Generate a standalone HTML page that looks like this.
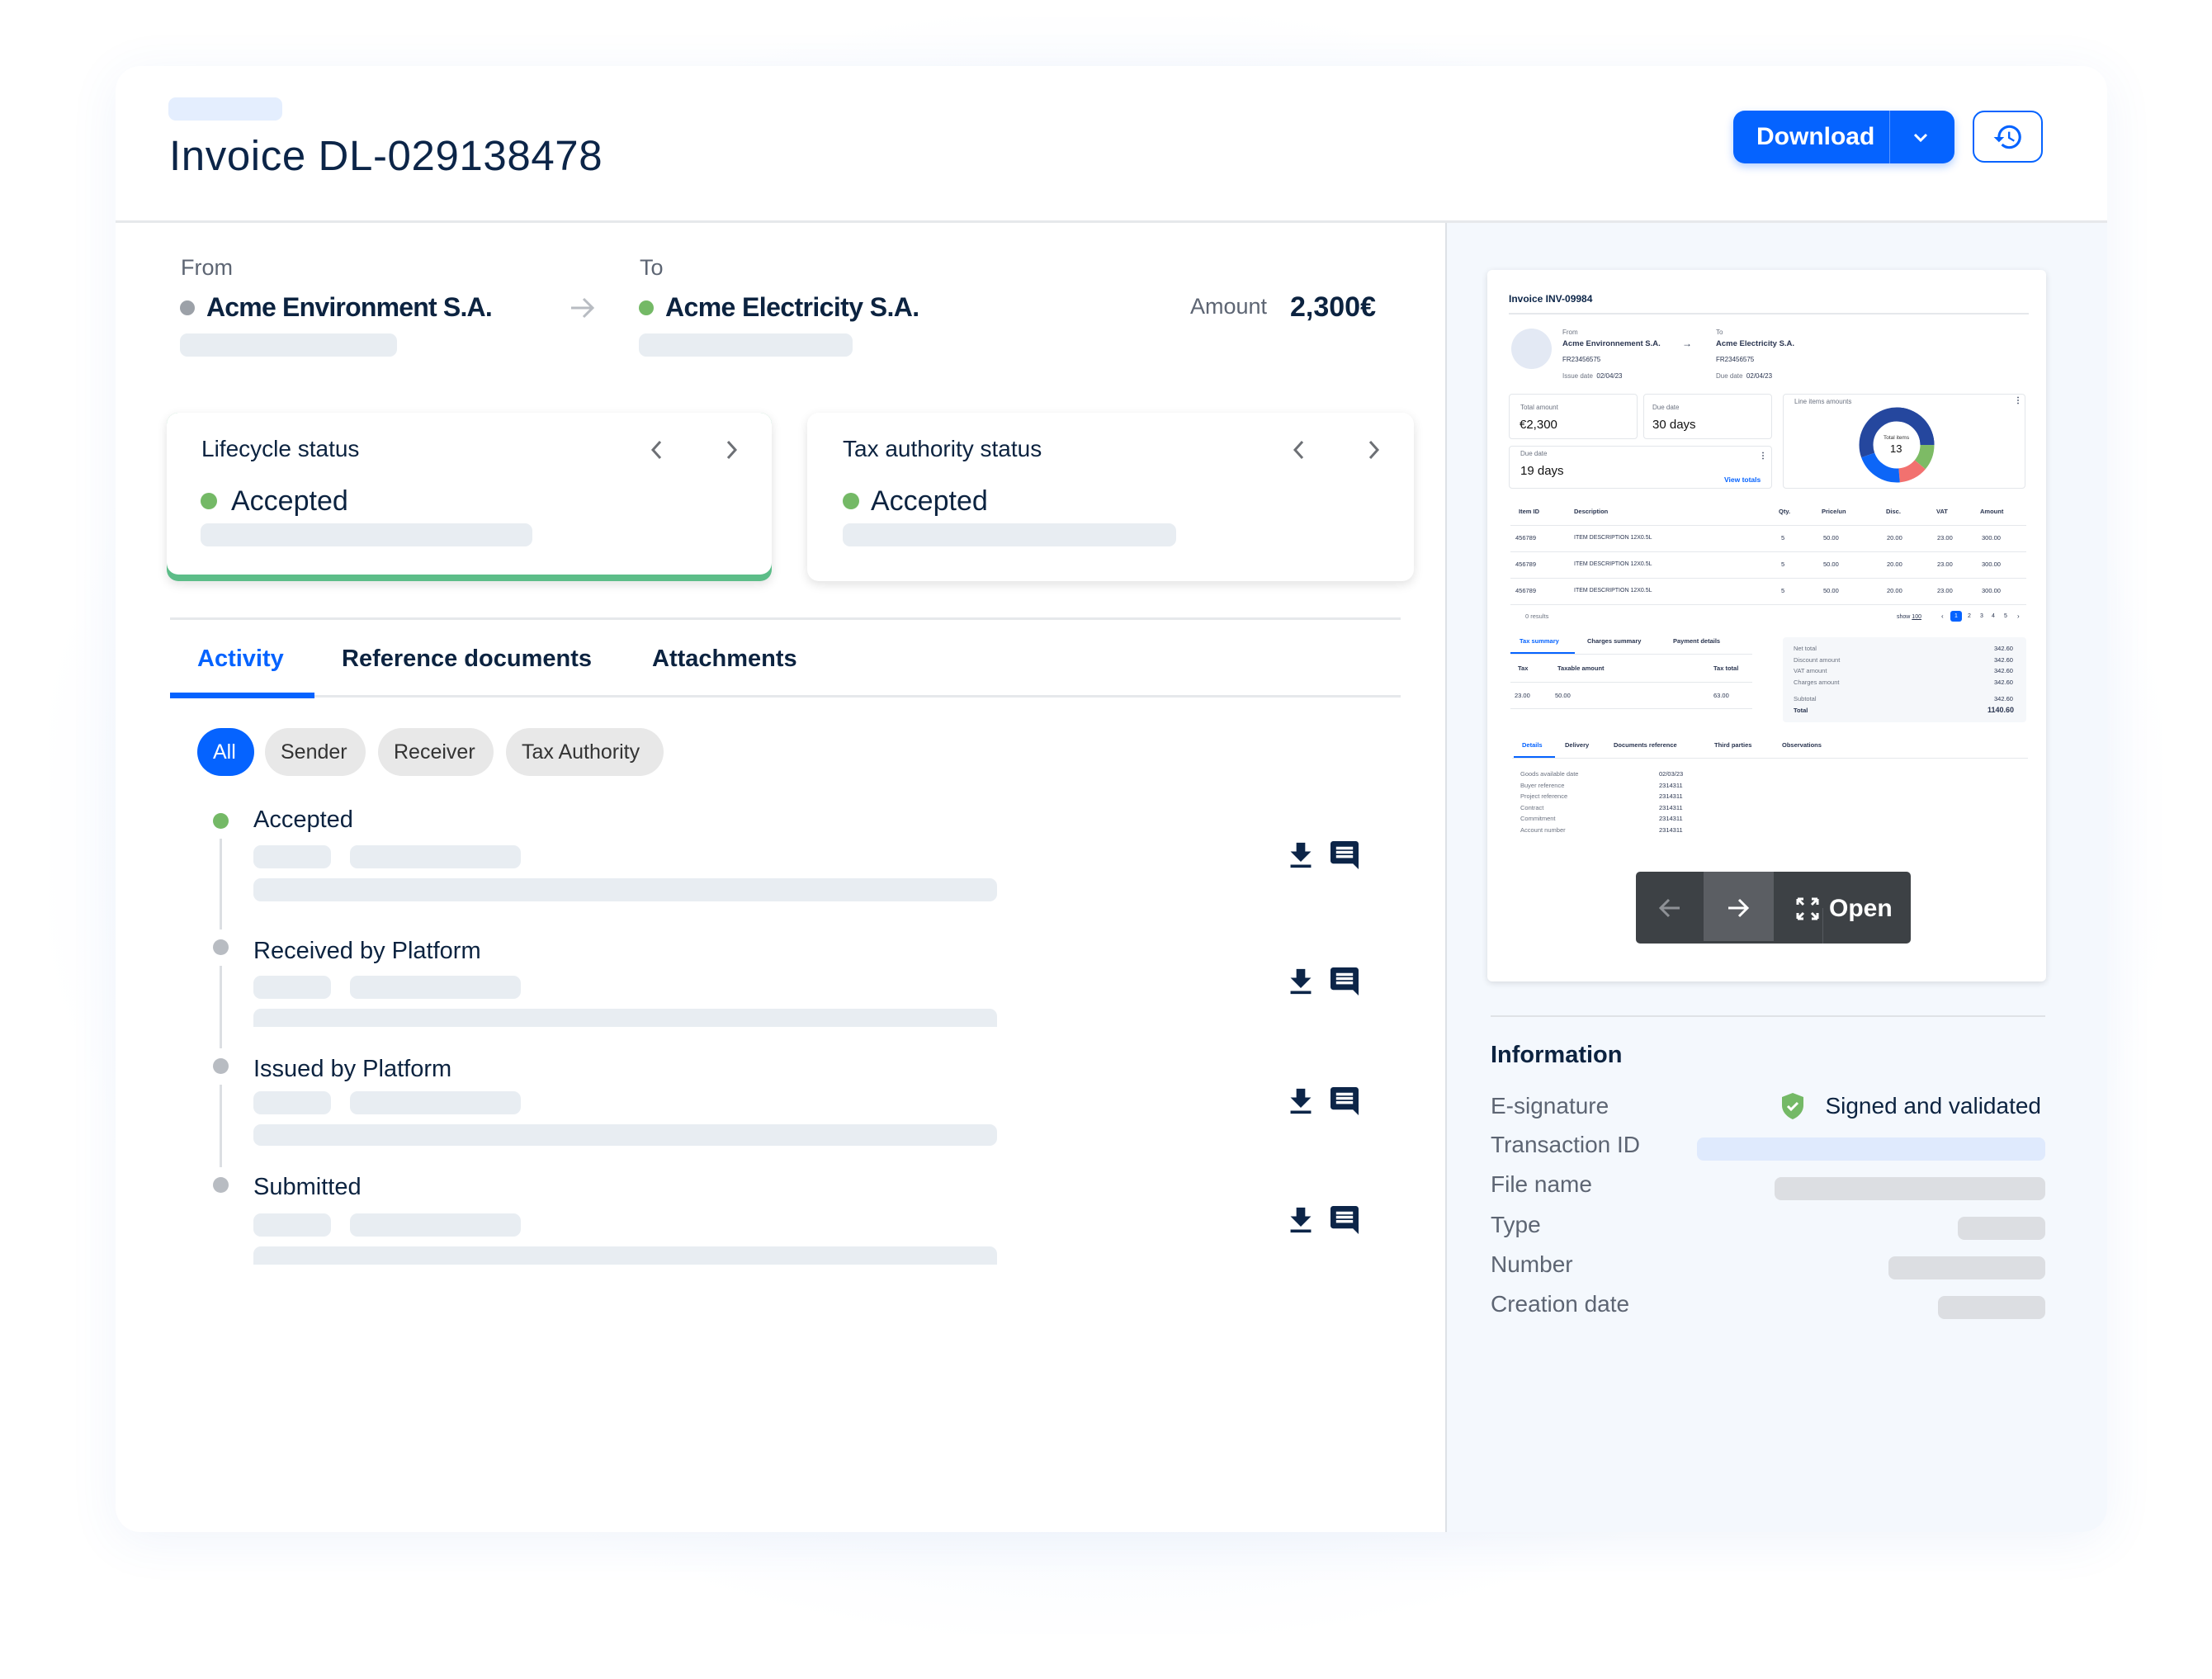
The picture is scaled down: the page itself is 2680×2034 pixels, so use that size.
<!DOCTYPE html>
<html><head><meta charset="utf-8"><style>
*{margin:0;padding:0;box-sizing:border-box}
body{width:2680px;height:2034px;position:relative;overflow:hidden;background:#fff;font-family:"Liberation Sans",sans-serif;color:#0c2340}
.a{position:absolute}
.t{position:absolute;white-space:nowrap;line-height:1}
.bar{position:absolute;background:#e8edf2;border-radius:9px}
.g{color:#5d6573}
.b{font-weight:bold}
.p{position:absolute;white-space:nowrap;line-height:1;font-size:9px;color:#2a3550}
.pl{color:#6b7280}
.ln{position:absolute;height:1px;background:#e5e8ec}
</style></head><body>
<div class="a" style="left:60px;top:20px;width:2560px;height:1960px;border-radius:80px;background:radial-gradient(ellipse at center,#eef4fd 40%,rgba(255,255,255,0) 72%)"></div>
<div class="a" style="left:140px;top:80px;width:2413px;height:1776px;background:#fff;border-radius:30px;overflow:hidden;box-shadow:0 10px 60px rgba(60,110,200,0.08)">
  <div class="a" style="left:1611px;top:188px;width:802px;height:1588px;background:#f4f8fd;border-left:2px solid #dde1e6"></div>
  <div class="a" style="left:0;top:187px;width:2413px;height:3px;background:#e6e8eb"></div>
</div>
<!-- header -->
<div class="a" style="left:204px;top:118px;width:138px;height:28px;background:#e4eefe;border-radius:9px"></div>
<div class="t" style="left:205px;top:163px;font-size:51px;letter-spacing:0.6px;color:#0c2548">Invoice DL-029138478</div>
<div class="a" style="left:2100px;top:134px;width:268px;height:64px;background:#0563ff;border-radius:14px;box-shadow:0 4px 10px rgba(5,99,255,0.3)"></div>
<div class="t b" style="left:2128px;top:151px;font-size:30px;color:#fff">Download</div>
<div class="a" style="left:2289px;top:134px;width:1px;height:64px;background:#5c97ff"></div>
<svg class="a" style="left:2315px;top:154px" width="24" height="24" viewBox="0 0 24 24"><path d="M5 9l7 7 7-7" fill="none" stroke="#fff" stroke-width="3"/></svg>
<div class="a" style="left:2390px;top:134px;width:85px;height:63px;border:2.5px solid #0563ff;border-radius:14px;background:#fff"></div>
<svg class="a" style="left:2414px;top:147px" width="38" height="38" viewBox="0 0 24 24"><path fill="#0563ff" d="M13 3a9 9 0 0 0-9 9H1l3.890 3.89.07.14L9 12H6c0-3.87 3.13-7 7-7s7 3.13 7 7-3.13 7-7 7c-1.93 0-3.68-.79-4.940-2.06l-1.42 1.42A8.954 8.954 0 0 0 13 21a9 9 0 0 0 0-18zm-1 5v5l4.28 2.54.72-1.21-3.5-2.08V8H12z"/></svg>
<!-- from/to -->
<div class="t g" style="left:219px;top:311px;font-size:27px">From</div>
<div class="a" style="left:218px;top:364px;width:18px;height:18px;border-radius:50%;background:#9ca1a8"></div>
<div class="t b" style="left:250px;top:356px;font-size:32px;letter-spacing:-0.8px">Acme Environment S.A.</div>
<div class="bar" style="left:218px;top:404px;width:263px;height:28px"></div>
<svg class="a" style="left:690px;top:358px" width="32" height="30" viewBox="0 0 32 30"><path d="M2 15h26M17 4l11 11-11 11" fill="none" stroke="#b8bcc2" stroke-width="3"/></svg>
<div class="t g" style="left:775px;top:311px;font-size:27px">To</div>
<div class="a" style="left:774px;top:364px;width:18px;height:18px;border-radius:50%;background:#74b966"></div>
<div class="t b" style="left:806px;top:356px;font-size:32px;letter-spacing:-0.6px">Acme Electricity S.A.</div>
<div class="bar" style="left:774px;top:404px;width:259px;height:28px"></div>
<div class="t g" style="left:1442px;top:358px;font-size:27px">Amount</div>
<div class="t b" style="left:1563px;top:355px;font-size:34px">2,300€</div>
<!-- status cards -->
<div class="a" style="left:202px;top:500px;width:733px;height:204px;background:#5cbd88;border-radius:14px;box-shadow:0 4px 12px rgba(0,0,0,0.12)"></div>
<div class="a" style="left:202px;top:500px;width:733px;height:196px;background:#fff;border-radius:14px"></div>
<div class="a" style="left:978px;top:500px;width:735px;height:204px;background:#fff;border-radius:14px;box-shadow:0 4px 12px rgba(0,0,0,0.12)"></div>
<div class="t" style="left:244px;top:530px;font-size:28px">Lifecycle status</div>
<div class="t" style="left:1021px;top:530px;font-size:28px">Tax authority status</div>
<svg class="a" style="left:784px;top:531px" width="120" height="28" viewBox="0 0 120 28"><path d="M16 4l-9 10 9 10M98 4l9 10-9 10" fill="none" stroke="#6d7075" stroke-width="3"/></svg>
<svg class="a" style="left:1562px;top:531px" width="120" height="28" viewBox="0 0 120 28"><path d="M16 4l-9 10 9 10M98 4l9 10-9 10" fill="none" stroke="#6d7075" stroke-width="3"/></svg>
<div class="a" style="left:243px;top:597px;width:20px;height:20px;border-radius:50%;background:#74b966"></div>
<div class="t" style="left:280px;top:590px;font-size:34px">Accepted</div>
<div class="bar" style="left:243px;top:634px;width:402px;height:28px"></div>
<div class="a" style="left:1021px;top:597px;width:20px;height:20px;border-radius:50%;background:#74b966"></div>
<div class="t" style="left:1055px;top:590px;font-size:34px">Accepted</div>
<div class="bar" style="left:1021px;top:634px;width:404px;height:28px"></div>
<!-- tabs -->
<div class="a" style="left:206px;top:748px;width:1491px;height:3px;background:#e6e8eb"></div>
<div class="a" style="left:206px;top:842px;width:1491px;height:3px;background:#e6e8eb"></div>
<div class="a" style="left:206px;top:839px;width:175px;height:7px;background:#0563ff"></div>
<div class="t b" style="left:239px;top:784px;font-size:29px;color:#0563ff">Activity</div>
<div class="t b" style="left:414px;top:784px;font-size:29px">Reference documents</div>
<div class="t b" style="left:790px;top:784px;font-size:29px">Attachments</div>
<!-- chips -->
<div class="a" style="left:239px;top:882px;width:69px;height:58px;border-radius:29px;background:#0563ff"></div>
<div class="t" style="left:258px;top:899px;font-size:25px;color:#fff">All</div>
<div class="a" style="left:321px;top:882px;width:122px;height:58px;border-radius:29px;background:#e8e8e8"></div>
<div class="t" style="left:340px;top:899px;font-size:25px;color:#333">Sender</div>
<div class="a" style="left:458px;top:882px;width:140px;height:58px;border-radius:29px;background:#e8e8e8"></div>
<div class="t" style="left:477px;top:899px;font-size:25px;color:#333">Receiver</div>
<div class="a" style="left:613px;top:882px;width:191px;height:58px;border-radius:29px;background:#e8e8e8"></div>
<div class="t" style="left:632px;top:899px;font-size:25px;color:#333">Tax Authority</div>
<!-- timeline -->
<div class="a" style="left:266px;top:1016px;width:3px;height:110px;background:#dcdfe3"></div>
<div class="a" style="left:266px;top:1170px;width:3px;height:100px;background:#dcdfe3"></div>
<div class="a" style="left:266px;top:1314px;width:3px;height:100px;background:#dcdfe3"></div>

<div class="a" style="left:258px;top:985px;width:19px;height:19px;border-radius:50%;background:#74b966"></div>
<div class="t" style="left:307px;top:979px;font-size:29px">Accepted</div>
<div class="bar" style="left:307px;top:1024px;width:94px;height:28px"></div>
<div class="bar" style="left:424px;top:1024px;width:207px;height:28px"></div>
<div class="bar" style="left:307px;top:1064px;width:901px;height:28px"></div>

<div class="a" style="left:258px;top:1138px;width:19px;height:19px;border-radius:50%;background:#b8bcc2"></div>
<div class="t" style="left:307px;top:1138px;font-size:29px">Received by Platform</div>
<div class="bar" style="left:307px;top:1182px;width:94px;height:28px"></div>
<div class="bar" style="left:424px;top:1182px;width:207px;height:28px"></div>
<div class="bar" style="left:307px;top:1222px;width:901px;height:22px;border-radius:9px 9px 0 0"></div>

<div class="a" style="left:258px;top:1282px;width:19px;height:19px;border-radius:50%;background:#b8bcc2"></div>
<div class="t" style="left:307px;top:1281px;font-size:29px">Issued by Platform</div>
<div class="bar" style="left:307px;top:1322px;width:94px;height:28px"></div>
<div class="bar" style="left:424px;top:1322px;width:207px;height:28px"></div>
<div class="bar" style="left:307px;top:1362px;width:901px;height:26px"></div>

<div class="a" style="left:258px;top:1426px;width:19px;height:19px;border-radius:50%;background:#b8bcc2"></div>
<div class="t" style="left:307px;top:1424px;font-size:29px">Submitted</div>
<div class="bar" style="left:307px;top:1470px;width:94px;height:28px"></div>
<div class="bar" style="left:424px;top:1470px;width:207px;height:28px"></div>
<div class="bar" style="left:307px;top:1510px;width:901px;height:22px;border-radius:9px 9px 0 0"></div>

<!-- icons -->
<svg class="a" style="left:1560px;top:1018px" width="32" height="36" viewBox="3 2 18 19"><path fill="#0c2548" d="M19 9h-4V3H9v6H5l7 7 7-7zM5 18v2h14v-2H5z"/></svg>
<svg class="a" style="left:1612px;top:1019px" width="34" height="34" viewBox="2 2 20 20"><path fill="#0c2548" d="M21.99 4c0-1.1-.89-2-1.99-2H4c-1.1 0-2 .9-2 2v12c0 1.1.9 2 2 2h14l4 4-.01-18zM18 14H6v-2h12v2zm0-3H6V9h12v2zm0-3H6V6h12v2z"/></svg>
<svg class="a" style="left:1560px;top:1171px" width="32" height="36" viewBox="3 2 18 19"><path fill="#0c2548" d="M19 9h-4V3H9v6H5l7 7 7-7zM5 18v2h14v-2H5z"/></svg>
<svg class="a" style="left:1612px;top:1172px" width="34" height="34" viewBox="2 2 20 20"><path fill="#0c2548" d="M21.99 4c0-1.1-.89-2-1.99-2H4c-1.1 0-2 .9-2 2v12c0 1.1.9 2 2 2h14l4 4-.01-18zM18 14H6v-2h12v2zm0-3H6V9h12v2zm0-3H6V6h12v2z"/></svg>
<svg class="a" style="left:1560px;top:1316px" width="32" height="36" viewBox="3 2 18 19"><path fill="#0c2548" d="M19 9h-4V3H9v6H5l7 7 7-7zM5 18v2h14v-2H5z"/></svg>
<svg class="a" style="left:1612px;top:1317px" width="34" height="34" viewBox="2 2 20 20"><path fill="#0c2548" d="M21.99 4c0-1.1-.89-2-1.99-2H4c-1.1 0-2 .9-2 2v12c0 1.1.9 2 2 2h14l4 4-.01-18zM18 14H6v-2h12v2zm0-3H6V9h12v2zm0-3H6V6h12v2z"/></svg>
<svg class="a" style="left:1560px;top:1460px" width="32" height="36" viewBox="3 2 18 19"><path fill="#0c2548" d="M19 9h-4V3H9v6H5l7 7 7-7zM5 18v2h14v-2H5z"/></svg>
<svg class="a" style="left:1612px;top:1461px" width="34" height="34" viewBox="2 2 20 20"><path fill="#0c2548" d="M21.99 4c0-1.1-.89-2-1.99-2H4c-1.1 0-2 .9-2 2v12c0 1.1.9 2 2 2h14l4 4-.01-18zM18 14H6v-2h12v2zm0-3H6V9h12v2zm0-3H6V6h12v2z"/></svg>

<!-- preview card -->
<div class="a" style="left:1802px;top:327px;width:677px;height:862px;background:#fff;border-radius:6px;box-shadow:0 2px 8px rgba(0,0,0,0.12)"></div>
<div class="p b" style="left:1828px;top:356px;font-size:12px;color:#0c2548">Invoice INV-09984</div>
<div class="ln" style="left:1828px;top:379px;width:630px;height:2px"></div>
<div class="a" style="left:1831px;top:398px;width:49px;height:49px;border-radius:50%;background:#e3e9f4"></div>
<div class="p pl" style="left:1893px;top:399px;font-size:8px">From</div>
<div class="p b" style="left:1893px;top:412px;font-size:9.5px">Acme Environnement S.A.</div>
<div class="p" style="left:1893px;top:432px;font-size:8px">FR23456575</div>
<div class="p" style="left:1893px;top:452px;font-size:8px"><span class="pl">Issue date</span>&nbsp; 02/04/23</div>
<div class="p" style="left:2038px;top:410px;font-size:12px">→</div>
<div class="p pl" style="left:2079px;top:399px;font-size:8px">To</div>
<div class="p b" style="left:2079px;top:412px;font-size:9.5px">Acme Electricity S.A.</div>
<div class="p" style="left:2079px;top:432px;font-size:8px">FR23456575</div>
<div class="p" style="left:2079px;top:452px;font-size:8px"><span class="pl">Due date</span>&nbsp; 02/04/23</div>
<div class="a" style="left:1828px;top:477px;width:156px;height:55px;border:1px solid #e3e6ea;border-radius:4px"></div>
<div class="a" style="left:1991px;top:477px;width:156px;height:55px;border:1px solid #e3e6ea;border-radius:4px"></div>
<div class="a" style="left:1828px;top:540px;width:319px;height:52px;border:1px solid #e3e6ea;border-radius:4px"></div>
<div class="a" style="left:2160px;top:477px;width:294px;height:115px;border:1px solid #e3e6ea;border-radius:4px"></div>
<div class="p pl" style="left:1842px;top:490px;font-size:8px">Total amount</div>
<div class="p" style="left:1841px;top:507px;font-size:15px;color:#111">€2,300</div>
<div class="p pl" style="left:2002px;top:490px;font-size:8px">Due date</div>
<div class="p" style="left:2002px;top:507px;font-size:15px;color:#111">30 days</div>
<div class="p pl" style="left:1842px;top:546px;font-size:8px">Due date</div>
<div class="p" style="left:1842px;top:563px;font-size:15px;color:#111">19 days</div>
<div class="p b" style="left:2089px;top:577px;font-size:8.5px;color:#0563ff">View totals</div>
<div class="p b" style="left:2131px;top:548px;font-size:10px">⋮</div>
<div class="p pl" style="left:2174px;top:483px;font-size:8px">Line items amounts</div>
<div class="p b" style="left:2440px;top:481px;font-size:10px">⋮</div>
<svg class="a" style="left:2252px;top:493px" width="92" height="92" viewBox="0 0 92 92">
<g fill="none" stroke-width="17" transform="rotate(-90 46 46)">
<circle cx="46" cy="46" r="37" stroke="#25479e" stroke-dasharray="129.2 103.3" stroke-dashoffset="-161.4"/>
<circle cx="46" cy="46" r="37" stroke="#25479e" stroke-dasharray="58.1 174.4" stroke-dashoffset="0"/>
<circle cx="46" cy="46" r="37" stroke="#7dbb65" stroke-dasharray="25.8 206.7" stroke-dashoffset="-58.1"/>
<circle cx="46" cy="46" r="37" stroke="#f2716f" stroke-dasharray="29 203.5" stroke-dashoffset="-83.9"/>
<circle cx="46" cy="46" r="37" stroke="#0d66f7" stroke-dasharray="48.5 184" stroke-dashoffset="-112.9"/>
</g></svg>
<div class="p" style="left:2282px;top:528px;font-size:6.5px;color:#333">Total items</div>
<div class="p" style="left:2290px;top:537px;font-size:13px;color:#111">13</div>
<!-- table -->
<div class="p b" style="left:1840px;top:616px;font-size:7.5px">Item ID</div>
<div class="p b" style="left:1907px;top:616px;font-size:7.5px">Description</div>
<div class="p b" style="left:2155px;top:616px;font-size:7.5px">Qty.</div>
<div class="p b" style="left:2207px;top:616px;font-size:7.5px">Price/un</div>
<div class="p b" style="left:2285px;top:616px;font-size:7.5px">Disc.</div>
<div class="p b" style="left:2346px;top:616px;font-size:7.5px">VAT</div>
<div class="p b" style="left:2399px;top:616px;font-size:7.5px">Amount</div>
<div class="ln" style="left:1830px;top:636px;width:625px"></div>
<div class="ln" style="left:1830px;top:668px;width:625px"></div>
<div class="ln" style="left:1830px;top:700px;width:625px"></div>
<div class="ln" style="left:1830px;top:732px;width:625px"></div>
<div class="p" style="left:1836px;top:648px;font-size:7.5px">456789</div>
<div class="p" style="left:1907px;top:648px;font-size:7px">ITEM DESCRIPTION 12X0.5L</div>
<div class="p" style="left:2158px;top:648px;font-size:7.5px">5</div><div class="p" style="left:2209px;top:648px;font-size:7.5px">50.00</div><div class="p" style="left:2286px;top:648px;font-size:7.5px">20.00</div><div class="p" style="left:2347px;top:648px;font-size:7.5px">23.00</div><div class="p" style="left:2401px;top:648px;font-size:7.5px">300.00</div>
<div class="p" style="left:1836px;top:680px;font-size:7.5px">456789</div>
<div class="p" style="left:1907px;top:680px;font-size:7px">ITEM DESCRIPTION 12X0.5L</div>
<div class="p" style="left:2158px;top:680px;font-size:7.5px">5</div><div class="p" style="left:2209px;top:680px;font-size:7.5px">50.00</div><div class="p" style="left:2286px;top:680px;font-size:7.5px">20.00</div><div class="p" style="left:2347px;top:680px;font-size:7.5px">23.00</div><div class="p" style="left:2401px;top:680px;font-size:7.5px">300.00</div>
<div class="p" style="left:1836px;top:712px;font-size:7.5px">456789</div>
<div class="p" style="left:1907px;top:712px;font-size:7px">ITEM DESCRIPTION 12X0.5L</div>
<div class="p" style="left:2158px;top:712px;font-size:7.5px">5</div><div class="p" style="left:2209px;top:712px;font-size:7.5px">50.00</div><div class="p" style="left:2286px;top:712px;font-size:7.5px">20.00</div><div class="p" style="left:2347px;top:712px;font-size:7.5px">23.00</div><div class="p" style="left:2401px;top:712px;font-size:7.5px">300.00</div>
<div class="p pl" style="left:1848px;top:743px;font-size:7.5px">0 results</div>
<div class="p" style="left:2298px;top:744px;font-size:7px">show <u>100</u></div>
<div class="p" style="left:2352px;top:743px;font-size:8px">‹</div>
<div class="a" style="left:2363px;top:740px;width:14px;height:13px;background:#0563ff;border-radius:3px"></div>
<div class="p" style="left:2368px;top:743px;font-size:7px;color:#fff">1</div>
<div class="p" style="left:2384px;top:743px;font-size:7px">2</div><div class="p" style="left:2399px;top:743px;font-size:7px">3</div><div class="p" style="left:2413px;top:743px;font-size:7px">4</div><div class="p" style="left:2428px;top:743px;font-size:7px">5</div><div class="p" style="left:2444px;top:743px;font-size:8px">›</div>
<!-- tax tabs -->
<div class="p b" style="left:1841px;top:773px;font-size:7.5px;color:#0563ff">Tax summary</div>
<div class="p b" style="left:1923px;top:773px;font-size:7.5px">Charges summary</div>
<div class="p b" style="left:2027px;top:773px;font-size:7.5px">Payment details</div>
<div class="ln" style="left:1830px;top:792px;width:293px"></div>
<div class="a" style="left:1830px;top:790px;width:78px;height:2px;background:#0563ff"></div>
<div class="p b" style="left:1839px;top:806px;font-size:7.5px">Tax</div>
<div class="p b" style="left:1887px;top:806px;font-size:7.5px">Taxable amount</div>
<div class="p b" style="left:2076px;top:806px;font-size:7.5px">Tax total</div>
<div class="ln" style="left:1830px;top:826px;width:293px"></div>
<div class="p" style="left:1835px;top:839px;font-size:7.5px">23.00</div>
<div class="p" style="left:1884px;top:839px;font-size:7.5px">50.00</div>
<div class="p" style="left:2076px;top:839px;font-size:7.5px">63.00</div>
<div class="ln" style="left:1830px;top:858px;width:293px"></div>
<div class="a" style="left:2160px;top:772px;width:295px;height:103px;background:#f5f7fa;border-radius:4px"></div>
<div class="p pl" style="left:2173px;top:779px;font-size:7.5px;line-height:1.8">Net total<br>Discount amount<br>VAT amount<br>Charges amount</div>
<div class="p" style="left:2416px;top:779px;font-size:7.5px;line-height:1.8">342.60<br>342.60<br>342.60<br>342.60</div>
<div class="p pl" style="left:2173px;top:843px;font-size:7.5px">Subtotal</div>
<div class="p" style="left:2416px;top:843px;font-size:7.5px">342.60</div>
<div class="p b" style="left:2173px;top:857px;font-size:7.5px">Total</div>
<div class="p b" style="left:2408px;top:856px;font-size:9px">1140.60</div>
<!-- details tabs -->
<div class="p b" style="left:1844px;top:899px;font-size:7.5px;color:#0563ff">Details</div>
<div class="p b" style="left:1896px;top:899px;font-size:7.5px">Delivery</div>
<div class="p b" style="left:1955px;top:899px;font-size:7.5px">Documents reference</div>
<div class="p b" style="left:2077px;top:899px;font-size:7.5px">Third parties</div>
<div class="p b" style="left:2159px;top:899px;font-size:7.5px">Observations</div>
<div class="ln" style="left:1832px;top:918px;width:625px"></div>
<div class="a" style="left:1834px;top:916px;width:50px;height:2px;background:#0563ff"></div>
<div class="p pl" style="left:1842px;top:931px;font-size:7.5px;line-height:1.8">Goods available date<br>Buyer reference<br>Project reference<br>Contract<br>Commitment<br>Account number</div>
<div class="p" style="left:2010px;top:931px;font-size:7.5px;line-height:1.8">02/03/23<br>2314311<br>2314311<br>2314311<br>2314311<br>2314311</div>
<!-- nav -->
<div class="a" style="left:1982px;top:1056px;width:333px;height:87px;background:#3d4145;border-radius:5px"></div>
<div class="a" style="left:2064px;top:1056px;width:85px;height:84px;background:#5b5e63"></div>
<div class="a" style="left:2208px;top:1100px;width:1px;height:43px;background:#55595e"></div>
<svg class="a" style="left:2008px;top:1085px" width="30" height="30" viewBox="0 0 30 30"><path d="M27 15H4M14 5L4 15l10 10" fill="none" stroke="#8e9196" stroke-width="3"/></svg>
<svg class="a" style="left:2091px;top:1085px" width="30" height="30" viewBox="0 0 30 30"><path d="M3 15h23M16 5l10 10-10 10" fill="none" stroke="#fff" stroke-width="3"/></svg>
<svg class="a" style="left:2175px;top:1086px" width="30" height="30" viewBox="0 0 30 30"><path d="M3 3l7 7M3 3v7M3 3h7M27 3l-7 7M27 3v7M27 3h-7M3 27l7-7M3 27v-7M3 27h7M27 27l-7-7M27 27v-7M27 27h-7" fill="none" stroke="#fff" stroke-width="3"/></svg>
<div class="t b" style="left:2216px;top:1086px;font-size:30px;color:#fff">Open</div>
<!-- information -->
<div class="a" style="left:1806px;top:1230px;width:672px;height:2px;background:#dfe2e6"></div>
<div class="t b" style="left:1806px;top:1264px;font-size:29px">Information</div>
<div class="t g" style="left:1806px;top:1326px;font-size:28px">E-signature</div>
<svg class="a" style="left:2157px;top:1323px" width="30" height="34" viewBox="0 0 30 34"><path d="M15 1L2 6v10c0 8 6 14 13 17 7-3 13-9 13-17V6z" fill="#74b966"/><path d="M9 17l4 4 8-8" fill="none" stroke="#fff" stroke-width="3"/></svg>
<div class="t" style="left:2198px;top:1326px;font-size:28px;width:275px;text-align:right">Signed and validated</div>
<div class="t g" style="left:1806px;top:1373px;font-size:28px">Transaction ID</div>
<div class="a" style="left:2056px;top:1378px;width:422px;height:28px;border-radius:8px;background:#dfeafd"></div>
<div class="t g" style="left:1806px;top:1421px;font-size:28px">File name</div>
<div class="a" style="left:2150px;top:1426px;width:328px;height:28px;border-radius:8px;background:#dcdee2"></div>
<div class="t g" style="left:1806px;top:1470px;font-size:28px">Type</div>
<div class="a" style="left:2372px;top:1474px;width:106px;height:28px;border-radius:8px;background:#dcdee2"></div>
<div class="t g" style="left:1806px;top:1518px;font-size:28px">Number</div>
<div class="a" style="left:2288px;top:1522px;width:190px;height:28px;border-radius:8px;background:#dcdee2"></div>
<div class="t g" style="left:1806px;top:1566px;font-size:28px">Creation date</div>
<div class="a" style="left:2348px;top:1570px;width:130px;height:28px;border-radius:8px;background:#dcdee2"></div>
</body></html>
